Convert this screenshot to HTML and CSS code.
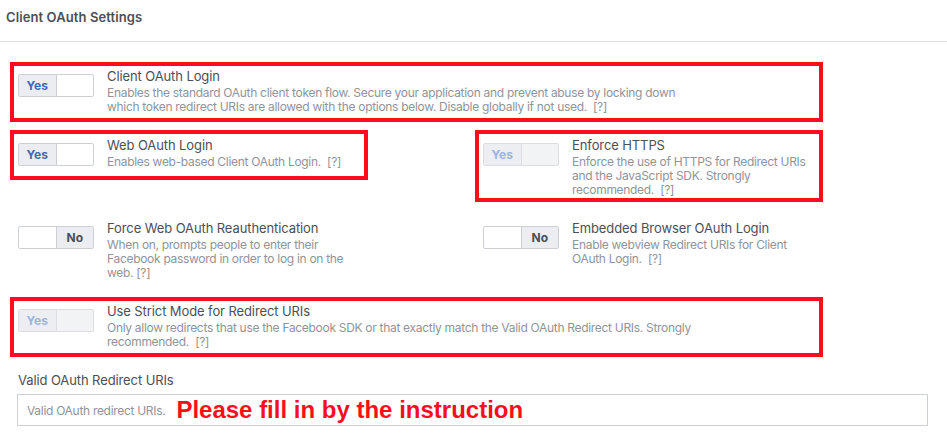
FILE: index.html
```html
<!DOCTYPE html>
<html lang="en">
<head>
<meta charset="utf-8">
<title>Client OAuth Settings</title>
<link rel="stylesheet" href="styles.css">
</head>
<body>
<div class="header">Client OAuth Settings</div>

<div class="settings">
  <div class="item wide marked">
    <span class="toggle"><span class="seg on">Yes</span><span class="seg"></span></span>
    <div class="text">
      <div class="title">Client OAuth Login</div>
      <div class="desc">Enables the standard OAuth client token flow. Secure your application and prevent abuse by locking down<br>which token redirect URIs are allowed with the options below. Disable globally if not used. &nbsp;[?]</div>
    </div>
  </div>

  <div class="item marked short">
    <span class="toggle"><span class="seg on">Yes</span><span class="seg"></span></span>
    <div class="text">
      <div class="title">Web OAuth Login</div>
      <div class="desc">Enables web-based Client OAuth Login. &nbsp;[?]</div>
    </div>
  </div>

  <div class="item marked tall">
    <span class="toggle disabled"><span class="seg on">Yes</span><span class="seg"></span></span>
    <div class="text">
      <div class="title">Enforce HTTPS</div>
      <div class="desc">Enforce the use of HTTPS for Redirect URIs<br>and the JavaScript SDK. Strongly<br>recommended. &nbsp;[?]</div>
    </div>
  </div>

  <div class="item">
    <span class="toggle"><span class="seg"></span><span class="seg on off">No</span></span>
    <div class="text">
      <div class="title">Force Web OAuth Reauthentication</div>
      <div class="desc">When on, prompts people to enter their<br>Facebook password in order to log in on the<br>web. [?]</div>
    </div>
  </div>

  <div class="item">
    <span class="toggle"><span class="seg"></span><span class="seg on off">No</span></span>
    <div class="text">
      <div class="title">Embedded Browser OAuth Login</div>
      <div class="desc">Enable webview Redirect URIs for Client<br>OAuth Login. &nbsp;[?]</div>
    </div>
  </div>

  <div class="item wide marked">
    <span class="toggle disabled"><span class="seg on">Yes</span><span class="seg"></span></span>
    <div class="text">
      <div class="title">Use Strict Mode for Redirect URIs</div>
      <div class="desc">Only allow redirects that use the Facebook SDK or that exactly match the Valid OAuth Redirect URIs. Strongly<br>recommended. &nbsp;[?]</div>
    </div>
  </div>
</div>

<div class="field">
  <div class="label">Valid OAuth Redirect URIs</div>
  <div class="input">
    <span class="placeholder">Valid OAuth redirect URIs.</span>
    <span class="note">Please fill in by the instruction</span>
  </div>
</div>
</body>
</html>
```

FILE: styles.css
```css
* { box-sizing: border-box; }

body {
  margin: 0;
  background: #fff;
  font-family: Inter, "Liberation Sans", Arial, sans-serif;
  color: #4b4f56;
}

.header {
  height: 42px;
  padding: 8px 0 0 6px;
  border-bottom: 1px solid #dddfe2;
  font-size: 13px;
  line-height: 18px;
  font-weight: 600;
  letter-spacing: 0.1px;
  color: #4b4f56;
}

.settings {
  display: grid;
  grid-template-columns: 342px 332px;
  column-gap: 123px;
  row-gap: 21px;
  padding: 24px 0 0 18px;
}

.item {
  position: relative;
  display: flex;
  align-self: start;
  align-items: flex-start;
  gap: 13px;
}

.wide { grid-column: 1 / -1; }

.marked::after {
  content: "";
  position: absolute;
  left: -8px;
  right: -8px;
  top: -4px;
  bottom: -8px;
  border: 4px solid #fb0d1e;
  pointer-events: none;
}

.marked.short::after { top: -5px; bottom: -11px; }
.marked.tall::after { top: -5px; bottom: -5px; }

.toggle {
  flex: none;
  display: flex;
  width: 76px;
  height: 23px;
  margin-top: 8px;
  border: 1px solid #ccd0d5;
  border-radius: 2px;
  background: #fff;
  overflow: hidden;
}

.seg {
  flex: 1;
  display: flex;
  align-items: center;
  justify-content: center;
  font-size: 12px;
  font-weight: 700;
}

.seg.on {
  background: #ebedf0;
  color: #4267b2;
}

.seg.on + .seg { border-left: 1px solid #ccd0d5; }
.seg + .seg.on { border-left: 1px solid #ccd0d5; }

.seg.off { color: #4b4f56; }

.toggle.disabled {
  border-color: #dadde1;
  background: #f2f3f5;
}

.toggle.disabled .seg.on {
  background: #eceef1;
  color: #9db3de;
}

.toggle.disabled .seg.on + .seg { border-left-color: #dadde1; }

.title {
  font-size: 13px;
  line-height: 20px;
  letter-spacing: -0.1px;
  color: #4b4f56;
}

.desc {
  font-size: 12px;
  line-height: 14px;
  letter-spacing: -0.3px;
  color: #90949c;
}

.field {
  padding: 21px 19px 12px 17px;
}

.label {
  font-size: 13px;
  line-height: 20px;
  letter-spacing: -0.1px;
  padding-left: 1px;
  margin-bottom: 4px;
  color: #4b4f56;
}

.input {
  display: flex;
  align-items: center;
  gap: 11px;
  height: 32px;
  padding: 0 9px;
  border: 1px solid #ccd0d5;
  background: #fff;
}

.placeholder {
  font-size: 12px;
  letter-spacing: -0.3px;
  color: #90949c;
}

.note {
  font-family: "Liberation Sans", Arial, sans-serif;
  font-size: 24px;
  font-weight: 700;
  color: #fb0d1e;
}
```
